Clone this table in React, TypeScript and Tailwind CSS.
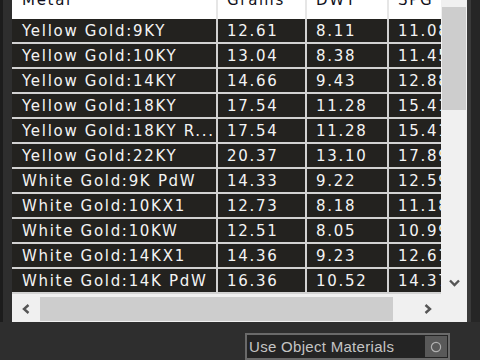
import React from "react";

const rows: [string, string, string, string][] = [
  ["Yellow Gold:9KY", "12.61", "8.11", "11.08"],
  ["Yellow Gold:10KY", "13.04", "8.38", "11.45"],
  ["Yellow Gold:14KY", "14.66", "9.43", "12.88"],
  ["Yellow Gold:18KY", "17.54", "11.28", "15.41"],
  ["Yellow Gold:18KY R...", "17.54", "11.28", "15.41"],
  ["Yellow Gold:22KY", "20.37", "13.10", "17.89"],
  ["White Gold:9K PdW", "14.33", "9.22", "12.59"],
  ["White Gold:10KX1", "12.73", "8.18", "11.18"],
  ["White Gold:10KW", "12.51", "8.05", "10.99"],
  ["White Gold:14KX1", "14.36", "9.23", "12.61"],
  ["White Gold:14K PdW", "16.36", "10.52", "14.37"],
];

const cellFont = "font-['DejaVu_Sans',Verdana,sans-serif] text-[15px] tracking-[1.7px] whitespace-nowrap";

function Chevron({ dir }: { dir: "down" | "left" | "right" }) {
  const d =
    dir === "down" ? "M1 1.5 L5.5 6 L10 1.5" : dir === "left" ? "M6.5 1 L2 5 L6.5 9" : "M1.5 1 L6 5 L1.5 9";
  const w = dir === "down" ? 11 : 8;
  const h = dir === "down" ? 8 : 10;
  return (
    <svg width={w} height={h} viewBox={`0 0 ${w} ${h}`}>
      <path d={d} fill="none" stroke="#555555" strokeWidth="2.4" />
    </svg>
  );
}

export default function App() {
  return (
    <div className="flex h-[360px] w-[480px] flex-col overflow-hidden bg-[#2e2e2e]">
      <div className="flex h-[322px] shrink-0">
        <div className="w-[3px] shrink-0 bg-[#1c1c1c]" />
        <div className="w-[9px] shrink-0" />

        {/* grid widget */}
        <div className="-mt-[12px] flex h-[334px] w-[455px] shrink-0 flex-col bg-[#f0f0f0]">
          <div className="flex h-[306px] shrink-0">
            <div className="flex w-[429px] shrink-0 flex-col overflow-hidden">
              <div className={`flex h-[31px] shrink-0 bg-white text-[#101020] ${cellFont}`}>
                <div className="w-[206px] shrink-0 border-r-2 border-[#e6e6e6] pl-[10px] pt-[3px] leading-[18px]">Metal</div>
                <div className="w-[89px] shrink-0 border-r-2 border-[#e6e6e6] pl-[9px] pt-[3px] leading-[18px]">Grams</div>
                <div className="w-[82px] shrink-0 border-r-2 border-[#e6e6e6] pl-[9px] pt-[3px] leading-[18px]">DWT</div>
                <div className="min-w-0 flex-1 overflow-hidden pl-[9px] pt-[3px] leading-[18px]">SPG</div>
              </div>
              {rows.map((r) => (
                <div
                  key={r[0]}
                  className={`flex h-[25px] shrink-0 border-b-2 border-[#d2d2d2] bg-[#23221f] text-[#f4f4f4] ${cellFont}`}
                >
                  <div className="w-[206px] shrink-0 overflow-hidden border-r-2 border-[#d2d2d2] pl-[10px] pt-[1px] leading-[22px]">{r[0]}</div>
                  <div className="w-[89px] shrink-0 border-r-2 border-[#d2d2d2] pl-[9px] pt-[1px] leading-[22px]">{r[1]}</div>
                  <div className="w-[82px] shrink-0 border-r-2 border-[#d2d2d2] pl-[9px] pt-[1px] leading-[22px]">{r[2]}</div>
                  <div className="min-w-0 flex-1 overflow-hidden pl-[9px] pt-[1px] leading-[22px]">{r[3]}</div>
                </div>
              ))}
            </div>
            {/* vertical scrollbar */}
            <div className="flex w-[26px] shrink-0 flex-col">
              <div className="h-[19px] shrink-0" />
              <div className="ml-[1px] h-[103px] w-[24px] shrink-0 bg-[#cdcdcd]" />
              <div className="flex-1" />
              <div className="flex h-[22px] shrink-0 items-center justify-center">
                <Chevron dir="down" />
              </div>
            </div>
          </div>
          {/* horizontal scrollbar */}
          <div className="flex h-[28px] shrink-0">
            <div className="flex w-[28px] shrink-0 items-center justify-center pt-[1px]">
              <Chevron dir="left" />
            </div>
            <div className="mt-[3px] h-[24px] w-[353px] shrink-0 bg-[#cdcdcd]" />
            <div className="flex-1" />
            <div className="flex w-[28px] shrink-0 items-center justify-center pl-[2px] pt-[1px]">
              <Chevron dir="right" />
            </div>
            <div className="w-[26px] shrink-0" />
          </div>
        </div>

        <div className="w-[4px] shrink-0 bg-[#3a3a3a]" />
        <div className="flex-1 bg-[#262626]" />
      </div>

      {/* bottom bar */}
      <div className="flex flex-1 pl-[245px] pt-[11px]">
        <div className="flex h-[27px] w-[205px] items-center border-2 border-[#6a6a6a] bg-[#242424]">
          <span className="pl-[2px] font-['Liberation_Sans',Arial,sans-serif] text-[15px] leading-none tracking-[0.3px] text-[#c4c4c4]">
            Use Object Materials
          </span>
          <div className="ml-auto mr-[1px] flex h-[21px] w-[22px] items-center justify-center bg-[#595959]">
            <svg width="12" height="12" viewBox="0 0 12 12">
              <circle cx="6" cy="6" r="4.6" fill="none" stroke="#b0b0b0" strokeWidth="1.2" />
            </svg>
          </div>
        </div>
      </div>
    </div>
  );
}
